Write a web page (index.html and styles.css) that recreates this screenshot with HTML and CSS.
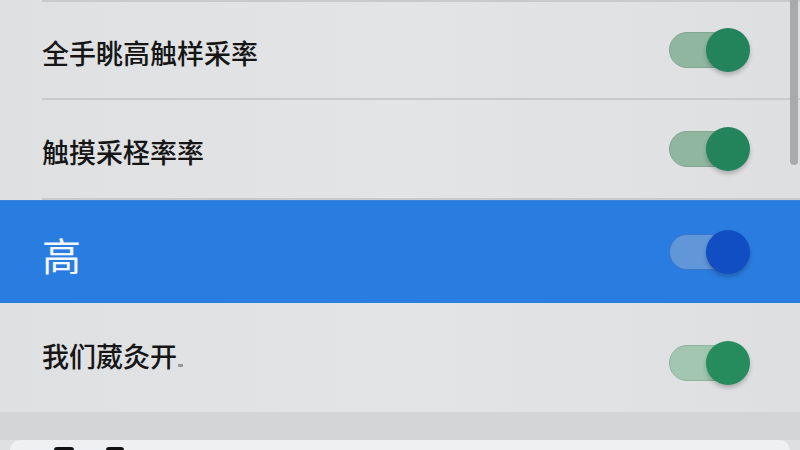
FILE: index.html
```html
<!DOCTYPE html>
<html lang="zh">
<head>
<meta charset="utf-8">
<link rel="stylesheet" href="styles.css">
</head>
<body>
<div class="screen">
  <div class="list">
    <div class="row first">
      <span class="label">全手眺高触样采率</span>
      <span class="toggle green"><span class="track"></span><span class="knob"></span></span>
    </div>
    <div class="row">
      <span class="label">触摸采柽率率</span>
      <span class="toggle green"><span class="track"></span><span class="knob"></span></span>
    </div>
    <div class="row selected">
      <span class="label big">高</span>
      <span class="toggle blue"><span class="track"></span><span class="knob"></span></span>
    </div>
    <div class="row last">
      <span class="label">我们葳灸开<span class="mark"></span></span>
      <span class="toggle green light"><span class="track"></span><span class="knob"></span></span>
    </div>
  </div>
  <div class="band"></div>
  <div class="card"><span class="frag f1"></span><span class="frag f2"></span></div>
  <div class="scrollbar"></div>
</div>
</body>
</html>
```

FILE: styles.css
```css
html, body {
  margin: 0;
  padding: 0;
}
body {
  width: 800px;
  height: 450px;
  overflow: hidden;
  background: #e1e2e4;
  font-family: "Noto Sans CJK SC", "Noto Sans", sans-serif;
}
.screen {
  position: relative;
  width: 800px;
  height: 450px;
  display: flex;
  flex-direction: column;
  background: linear-gradient(90deg, #dfe0e2, #e3e4e6 50%, #dedfe1);
}
.list {
  display: flex;
  flex-direction: column;
}
.row {
  height: 100px;
  display: flex;
  align-items: center;
  justify-content: space-between;
  padding: 0 49px 0 0;
  box-sizing: border-box;
  border-bottom: 2px solid #c9cacc;
  margin-left: 42px;
}
.row.first {
  border-top: 2px solid #c9cacc;
}
.row.selected {
  margin-left: 0;
  padding-left: 42px;
  height: 103px;
  background: #2a7de0;
  border-bottom: none;
  border-top: 1px solid #3a86df;
}
.row.last {
  height: 109px;
  border-bottom: none;
}
.label {
  font-size: 27px;
  font-weight: 500;
  line-height: 1;
  color: #161616;
  margin-top: 5px;
}
.label.big {
  font-size: 39px;
  font-weight: 400;
  color: #f4f8fd;
  margin-top: 4px;
}
.row.last .label {
  margin-top: -4px;
}
.mark {
  display: inline-block;
  width: 5px;
  height: 3px;
  background: #9a9a9a;
  margin-left: 1px;
}
.toggle {
  position: relative;
  width: 82px;
  height: 44px;
  display: block;
}
.row.last .toggle {
  margin-top: 10px;
}
.track {
  position: absolute;
  left: 0;
  top: 4px;
  width: 64px;
  height: 36px;
  border-radius: 18px;
  box-sizing: border-box;
}
.knob {
  position: absolute;
  left: 37px;
  top: 0;
  width: 44px;
  height: 44px;
  border-radius: 50%;
  box-shadow: 0 3px 4px rgba(0, 0, 0, 0.22);
}
.green .track {
  background: #90b6a0;
  border: 1px solid #7fa78f;
}
.green .knob {
  background: #23835a;
}
.green.light .track {
  background: #a2c6b0;
  border-color: #8fb39c;
}
.green.light .knob {
  background: #268c5d;
}
.blue .track {
  background: #6196d8;
  border: 1px solid #3d78c9;
}
.blue .knob {
  background: #114ec4;
}
.band {
  height: 28px;
  background: #d4d5d7;
}
.card {
  position: relative;
  flex: 1;
  margin: 0 10px;
  background: #eef0f1;
  border-radius: 16px 16px 0 0;
}
.frag {
  position: absolute;
  top: 7px;
  height: 3px;
  background: #111;
  border-radius: 3px 3px 0 0;
}
.f1 { left: 44px; width: 20px; }
.f2 { left: 96px; width: 18px; }
.scrollbar {
  position: absolute;
  right: 2px;
  top: 0;
  width: 8px;
  height: 165px;
  background: #a8aaac;
  border-radius: 0 0 4px 4px;
}
```
